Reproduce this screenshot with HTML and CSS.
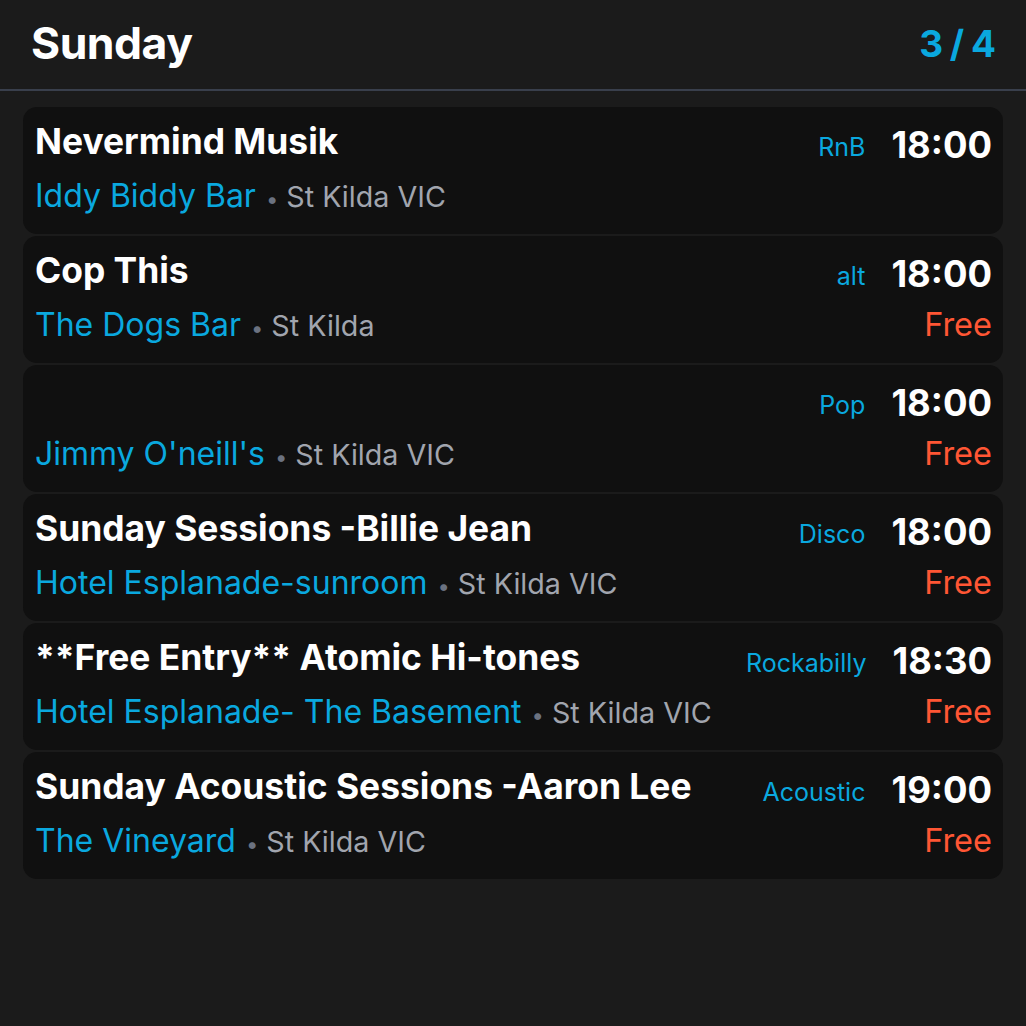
FILE: index.html
```html
<!DOCTYPE html>
<html>
<head>
<meta charset="utf-8">
<link rel="stylesheet" href="styles.css">
</head>
<body>
<div class="page">
  <header class="header">
    <h1 class="day">Sunday</h1>
    <div class="pager">3 / 4</div>
  </header>
  <main class="list">
    <div class="card">
      <div class="main">
        <div class="title">Nevermind Musik</div>
        <div class="place"><span class="venue">Iddy Biddy Bar</span><span class="dot">•</span><span class="loc">St Kilda VIC</span></div>
      </div>
      <div class="genre">RnB</div>
      <div class="side">
        <div class="time">18:00</div>
        <div class="price"></div>
      </div>
    </div>
    <div class="card">
      <div class="main">
        <div class="title">Cop This</div>
        <div class="place"><span class="venue">The Dogs Bar</span><span class="dot">•</span><span class="loc">St Kilda</span></div>
      </div>
      <div class="genre">alt</div>
      <div class="side">
        <div class="time">18:00</div>
        <div class="price">Free</div>
      </div>
    </div>
    <div class="card">
      <div class="main">
        <div class="title"></div>
        <div class="place"><span class="venue">Jimmy O'neill's</span><span class="dot">•</span><span class="loc">St Kilda VIC</span></div>
      </div>
      <div class="genre">Pop</div>
      <div class="side">
        <div class="time">18:00</div>
        <div class="price">Free</div>
      </div>
    </div>
    <div class="card">
      <div class="main">
        <div class="title">Sunday Sessions -Billie Jean</div>
        <div class="place"><span class="venue">Hotel Esplanade-sunroom</span><span class="dot">•</span><span class="loc">St Kilda VIC</span></div>
      </div>
      <div class="genre">Disco</div>
      <div class="side">
        <div class="time">18:00</div>
        <div class="price">Free</div>
      </div>
    </div>
    <div class="card">
      <div class="main">
        <div class="title">**Free Entry** Atomic Hi-tones</div>
        <div class="place"><span class="venue">Hotel Esplanade- The Basement</span><span class="dot">•</span><span class="loc">St Kilda VIC</span></div>
      </div>
      <div class="genre">Rockabilly</div>
      <div class="side">
        <div class="time">18:30</div>
        <div class="price">Free</div>
      </div>
    </div>
    <div class="card">
      <div class="main">
        <div class="title">Sunday Acoustic Sessions -Aaron Lee</div>
        <div class="place"><span class="venue">The Vineyard</span><span class="dot">•</span><span class="loc">St Kilda VIC</span></div>
      </div>
      <div class="genre">Acoustic</div>
      <div class="side">
        <div class="time">19:00</div>
        <div class="price">Free</div>
      </div>
    </div>
  </main>
</div>
</body>
</html>
```

FILE: styles.css
```css
* { box-sizing: border-box; }
html, body {
  margin: 0;
  padding: 0;
  background: #1b1b1b;
  font-family: Inter, "Noto Sans", sans-serif;
  color: #fff;
}
.page {
  width: 1026px;
  height: 1026px;
}
.header {
  height: 91px;
  display: flex;
  align-items: center;
  justify-content: space-between;
  padding: 0 30px 2px 31px;
  border-bottom: 2px solid #393f4c;
}
.day {
  margin: 0;
  font-size: 44.5px;
  font-weight: 700;
  letter-spacing: -0.5px;
  line-height: 1;
}
.pager {
  font-size: 37px;
  font-weight: 700;
  color: #0aa8df;
  line-height: 1;
  word-spacing: -2px;
}
.list {
  padding: 16px 23px;
  display: flex;
  flex-direction: column;
  gap: 2px;
}
.card {
  height: 127px;
  background: #101010;
  border-radius: 14px;
  padding: 12px 11px 12px 12px;
  display: flex;
  align-items: flex-start;
}
.main {
  flex: 1;
  min-width: 0;
}
.title {
  font-size: 35.4px;
  font-weight: 700;
  line-height: 46px;
  min-height: 46px;
  white-space: nowrap;
}
.place {
  margin-top: 11px;
  line-height: 40px;
  white-space: nowrap;
}
.venue {
  font-size: 32px;
  color: #0aa8df;
}
.dot {
  font-size: 22px;
  color: #6b7280;
  margin: 0 8px 0 10px;
}
.loc {
  font-size: 28.7px;
  color: #a1a5ae;
}
.genre {
  font-size: 25px;
  color: #0aa8df;
  line-height: 46px;
  padding-top: 5px;
  margin-right: 26px;
}
.side {
  text-align: right;
}
.time {
  font-size: 36.4px;
  font-weight: 700;
  line-height: 46px;
  padding-top: 3px;
}
.price {
  font-size: 32.5px;
  color: #ff5634;
  line-height: 40px;
  margin-top: 8px;
}
```
